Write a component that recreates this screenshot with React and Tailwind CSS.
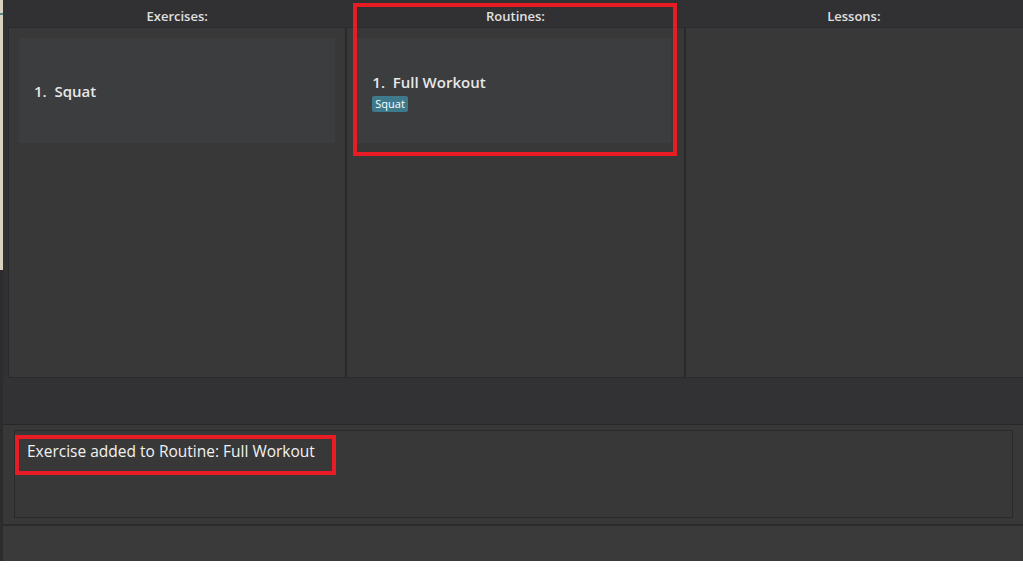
import React from "react";

const font = { fontFamily: '"Open Sans", "Noto Sans", sans-serif' };

function Column({ title, children, last }) {
  return (
    <div className="flex flex-col flex-1 min-w-0">
      <div className="h-[28px] flex items-center justify-center pt-[6px] text-[13px] font-semibold text-[#e0e0e0] border-b border-[#2a2a2c]">
        {title}
      </div>
      <div
        className={`flex-1 bg-[#383838] border-l border-[#2a2a2a] border-b ${
          last ? "" : "border-r"
        } p-[10px]`}
      >
        {children}
      </div>
    </div>
  );
}

export default function App() {
  return (
    <div className="w-[1023px] h-[561px] flex bg-[#313133] overflow-hidden" style={font}>
      <div className="w-[3px] flex flex-col">
        <div className="h-[13px] bg-[#d9d2c0]" />
        <div className="h-[2px] bg-[#5a8790]" />
        <div className="h-[255px] bg-[#d9d2c0]" />
        <div className="flex-1 bg-[#2c2c2e]" />
      </div>
      <div className="flex-1 flex flex-col min-w-0">
        <div className="flex h-[378px] pl-[5px]">
          <Column title="Exercises:">
            <div className="h-[105px] bg-[#3c3d3f] flex flex-col justify-center pl-[15px]">
              <div className="text-[15px] font-semibold text-[#e8e8e8] mt-[2px]">1.&nbsp;&nbsp;Squat</div>
            </div>
          </Column>
          <Column title="Routines:">
            <div className="relative">
              <div className="h-[105px] bg-[#3c3d3f] flex flex-col justify-center pl-[15px] pr-[3px] mr-[3px] pt-[10px]">
                <div className="text-[15px] font-semibold text-[#e8e8e8] leading-[20px]">
                  1.&nbsp;&nbsp;Full Workout
                </div>
                <div className="mt-[4px]">
                  <span className="inline-block bg-[#3e7a8c] text-white text-[11px] leading-[16px] px-[3px] rounded-[2px] align-top">
                    Squat
                  </span>
                </div>
              </div>
              <div className="absolute left-[-4px] top-[-35px] w-[324px] h-[153px] border-[4px] border-[#e81c24] pointer-events-none" />
            </div>
          </Column>
          <Column title="Lessons:" last />
        </div>
        <div className="h-[47px] bg-[#323234] border-b border-[#28282a]" />
        <div className="h-[99px] bg-[#383838] pl-[11px] pr-[10px] pt-[5px] pb-[6px] relative">
          <div className="h-full border border-[#2a2a2a] bg-[#383838] pl-[12px] pt-[10px]">
            <div className="text-[15.5px] text-[#f2f2f2] leading-[20px]">
              Exercise added to Routine: Full Workout
            </div>
          </div>
          <div className="absolute left-[12px] top-[10px] w-[321px] h-[40px] border-[4px] border-[#e81c24] pointer-events-none" />
        </div>
        <div className="flex-1 bg-[#3a3a3a] border-t-2 border-[#2b2b2b]" />
      </div>
    </div>
  );
}
